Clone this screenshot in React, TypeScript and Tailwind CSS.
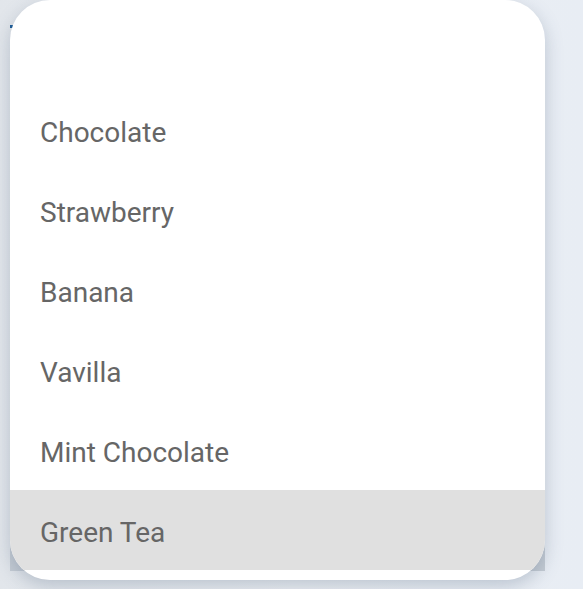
import React from 'react';

const flavours = ['', 'Chocolate', 'Strawberry', 'Banana', 'Vavilla', 'Mint Chocolate', 'Green Tea'];

export default function App() {
  const selected = 'Green Tea';

  return (
    <div
      className="relative w-[583px] h-[589px] overflow-hidden bg-gradient-to-r from-[#e2e6eb] via-[#eceff3] to-[#e8edf4]"
      style={{ fontFamily: 'Roboto, "Liberation Sans", sans-serif' }}
    >
      {/* Page content under the open menu */}
      <div className="pl-[10px] pt-[25px]">
        <div className="w-[6px] h-[3px] bg-[#1e5d98]" />
      </div>
      <div className="absolute left-[10px] top-[500px] w-[535px] h-[71px] bg-[#c5ccd4]" />

      {/* Menu */}
      <ul className="absolute left-[10px] top-0 w-[535px] rounded-[40px] bg-white py-[10px] overflow-hidden shadow-[0_6px_18px_rgba(70,90,120,0.28)]">
        {flavours.map((name, i) => (
          <li
            key={i}
            className={`h-[80px] flex items-center pl-[30px] pt-[6px] text-[28px] text-[#666666] ${
              name === selected ? 'bg-[#e0e0e0]' : ''
            }`}
          >
            {name}
          </li>
        ))}
      </ul>
    </div>
  );
}
